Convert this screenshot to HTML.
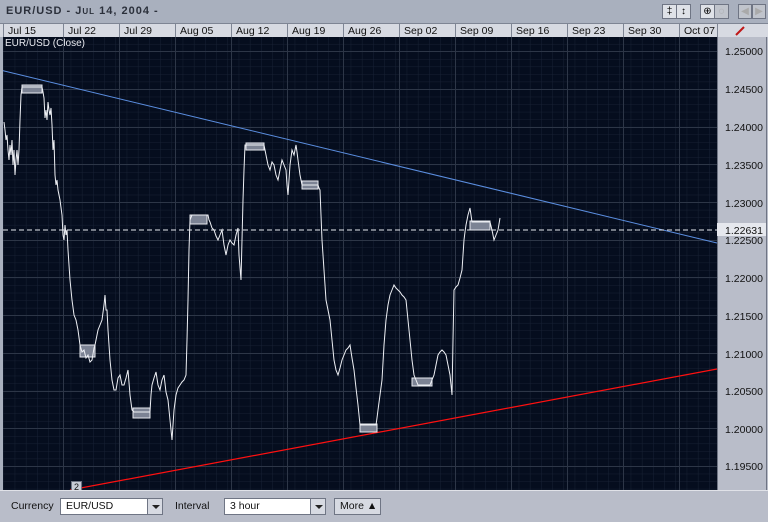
<!DOCTYPE html>
<html><head><style>
body{margin:0;width:768px;height:521px;overflow:hidden;background:#a9b0be;font-family:"Liberation Sans",sans-serif;position:relative}
.top{position:absolute;left:0;top:0;width:768px;height:23px;background:#a9b0be}
.title{position:absolute;left:6px;top:5px;font-size:11px;font-weight:bold;color:#2b303b;letter-spacing:1px;font-variant:small-caps}
.hdr{position:absolute;top:23px;height:14px;left:0;width:768px;background:#d7dae2;border-top:1px solid #7e8594}
.hc{position:absolute;top:0;height:14px;font-size:10.5px;color:#111;border-left:1px solid #7e8594;padding-left:4px;line-height:14px;box-sizing:border-box}
.btn{position:absolute;top:4px;height:15px;background:#dfe2e8;border:1px solid #6f7584;box-sizing:border-box;font-size:10px;text-align:center;line-height:13px}
.bot{position:absolute;left:0;top:490px;width:768px;height:31px;background:#b9bdc9;border-top:1px solid #e0e2e8;font-size:10.5px;color:#111}
.sel{position:absolute;top:7px;height:17px;background:#fff;border:1px solid #6f7584;box-sizing:border-box;padding-left:5px;line-height:15px}
.arr{position:absolute;top:7px;width:16px;height:17px;background:#d7dae2;border:1px solid #6f7584;box-sizing:border-box}
.arr:after{content:"";position:absolute;left:4px;top:6px;border-left:4px solid transparent;border-right:4px solid transparent;border-top:4px solid #222}
</style></head><body>
<div class="top"><div class="title">EUR/USD - Jul 14, 2004 -</div>
<div class="btn" style="left:662px;width:15px">‡</div><div class="btn" style="left:676px;width:15px">↕</div>
<div class="btn" style="left:700px;width:15px">⊕</div><div class="btn" style="left:714px;width:15px;color:#999;background:#c0c4cc">◌</div>
<div class="btn" style="left:738px;width:14px;color:#aaa;background:#c0c4cc">◀</div><div class="btn" style="left:752px;width:14px;color:#aaa;background:#c0c4cc">▶</div>
</div>
<div class="hdr">
<div class="hc" style="left:3px;width:60px">Jul 15</div><div class="hc" style="left:63px;width:56px">Jul 22</div><div class="hc" style="left:119px;width:56px">Jul 29</div><div class="hc" style="left:175px;width:56px">Aug 05</div><div class="hc" style="left:231px;width:56px">Aug 12</div><div class="hc" style="left:287px;width:56px">Aug 19</div><div class="hc" style="left:343px;width:56px">Aug 26</div><div class="hc" style="left:399px;width:56px">Sep 02</div><div class="hc" style="left:455px;width:56px">Sep 09</div><div class="hc" style="left:511px;width:56px">Sep 16</div><div class="hc" style="left:567px;width:56px">Sep 23</div><div class="hc" style="left:623px;width:56px">Sep 30</div><div class="hc" style="left:679px;width:38px">Oct 07</div>
<div class="hc" style="left:717px;width:51px"><svg width="40" height="14"><line x1="14" y1="11" x2="22" y2="3" stroke="#c01818" stroke-width="2"/></svg></div>
</div>
<svg style="position:absolute;left:0;top:37px" width="768" height="453">
<defs>
<pattern id="mg" patternUnits="userSpaceOnUse" x="3.5" y="14.5" width="11.2" height="7.54">
<path d="M0 0V7.54M0 0H11.2" stroke="#182134" stroke-width="1" fill="none"/>
</pattern>
</defs>
<rect x="3" y="0" width="714" height="453" fill="#050d1e"/>
<rect x="3" y="0" width="714" height="453" fill="url(#mg)"/>
<path stroke="#2d3647" stroke-width="1" fill="none" d="M63.5 0V453M119.5 0V453M175.5 0V453M231.5 0V453M287.5 0V453M343.5 0V453M399.5 0V453M455.5 0V453M511.5 0V453M567.5 0V453M623.5 0V453M679.5 0V453M3 14.5H717M3 52.5H717M3 90.5H717M3 127.5H717M3 165.5H717M3 203.5H717M3 240.5H717M3 278.5H717M3 316.5H717M3 354.5H717M3 391.5H717M3 429.5H717"/>
<rect x="717" y="0" width="51" height="453" fill="#b9bdc9"/>
<line x1="717.5" y1="0" x2="717.5" y2="453" stroke="#6f7584"/>
<line x1="766.5" y1="0" x2="766.5" y2="453" stroke="#6f7584"/>
<line x1="0" y1="33" x2="717" y2="206" stroke="#5b8ee0" stroke-width="1"/>
<line x1="70" y1="453" x2="717" y2="332" stroke="#ff1010" stroke-width="1.2"/>
<g transform="translate(0,-37)" fill="#7c8394" stroke="#e8eaf0" stroke-width="1">
<rect x="22" y="85" width="20" height="8"/><rect x="80" y="345" width="15" height="12"/><rect x="133" y="408" width="17" height="10"/><rect x="190" y="215" width="17" height="9"/><rect x="246" y="143" width="18" height="7"/><rect x="302" y="181" width="16" height="8"/><rect x="360" y="424" width="17" height="8"/><rect x="412" y="378" width="20" height="8"/><rect x="470" y="221" width="20" height="9"/>
<polyline fill="none" stroke="#eef0f5" points="4,122 5,130 6,140 7,135 8,150 9,160 10,145 11,155 12,140 13,165 14,150 15,175 16,160 17,150 18,165 19,150 20,120 21,95 22,87 42,87 43,92 44,98 45,118 46,110 47,120 48,102 49,110 50,115 51,108 52,125 53,150 54,140 55,175 56,185 57,180 58,190 60,200 62,215 63,235 64,240 65,225 66,235 67,230 68,250 70,280 72,300 74,315 76,320 78,330 80,345 82,352 84,350 86,358 88,355 90,362 92,360 94,348 95,345 97,335 98,330 100,325 102,320 104,305 105,295 106,310 107,310 108,330 110,360 111,370 112,380 114,390 116,390 118,378 120,375 122,385 124,385 126,378 128,370 130,395 132,410 134,412 150,412 151,395 152,385 154,378 156,372 158,385 160,390 162,380 164,375 166,392 168,400 170,420 172,440 174,410 176,395 178,388 180,385 182,382 184,380 186,375 187,340 188,300 189,250 190,220 192,215 208,215 209,220 210,222 212,228 214,230 216,236 218,240 220,235 222,230 224,245 226,255 228,245 230,240 232,243 234,245 236,235 238,228 239,255 241,280 242,240 243,200 244,170 245,145 248,145 264,145 265,150 266,155 268,165 270,170 272,162 274,165 276,175 278,180 280,170 282,160 284,165 286,170 287,185 288,195 290,165 292,150 294,155 296,145 297,152 298,160 300,175 302,185 318,185 319,188 320,190 321,215 322,240 324,270 326,300 328,310 330,320 332,340 334,360 336,370 338,375 340,368 342,360 344,355 346,350 348,348 350,345 352,358 354,370 356,388 358,405 359,415 360,425 376,425 377,418 378,410 380,395 382,380 384,345 386,320 388,305 390,295 392,290 394,285 396,288 398,290 400,292 402,295 404,297 406,300 408,320 410,340 412,360 414,375 416,380 418,385 430,385 432,380 434,375 436,365 438,355 440,352 442,350 444,352 446,355 448,365 450,375 451,385 452,395 453,340 454,290 456,287 458,285 460,278 462,270 463,255 464,240 465,232 466,225 468,215 470,208 471,215 472,222 490,222 492,230 494,240 496,235 498,230 499,224 500,218"/>
</g>
<line x1="3" y1="193" x2="717" y2="193" stroke="#e8eaf0" stroke-dasharray="5,3"/>
<rect x="717" y="186" width="49" height="13" fill="#e6e8ee"/>
<g font-size="10.5" fill="#111" text-anchor="end" font-family="Liberation Sans">
<text x="763" y="18">1.25000</text><text x="763" y="56">1.24500</text><text x="763" y="94">1.24000</text><text x="763" y="132">1.23500</text><text x="763" y="170">1.23000</text><text x="763" y="207">1.22500</text><text x="763" y="245">1.22000</text><text x="763" y="283">1.21500</text><text x="763" y="321">1.21000</text><text x="763" y="358">1.20500</text><text x="763" y="396">1.20000</text><text x="763" y="433">1.19500</text>
<text x="763" y="197">1.22631</text>
</g>
<text x="5" y="9" font-size="10" fill="#e8eaf0" font-family="Liberation Sans">EUR/USD (Close)</text>
<rect x="71.5" y="444.5" width="10" height="9" fill="#c8ccd6" stroke="#6f7584"/><text x="74" y="453" font-size="9" fill="#111">2</text>
<rect x="0" y="0" width="3" height="453" fill="#a9b0be"/>
</svg>
<div class="bot">
<div style="position:absolute;left:11px;top:9px">Currency</div>
<div class="sel" style="left:60px;width:88px">EUR/USD</div><div class="arr" style="left:147px"></div>
<div style="position:absolute;left:175px;top:9px">Interval</div>
<div class="sel" style="left:224px;width:87px">3 hour</div><div class="arr" style="left:310px"></div>
<div class="sel" style="left:334px;width:47px;background:#d7dae2">More ▲</div>
</div>
</body></html>
